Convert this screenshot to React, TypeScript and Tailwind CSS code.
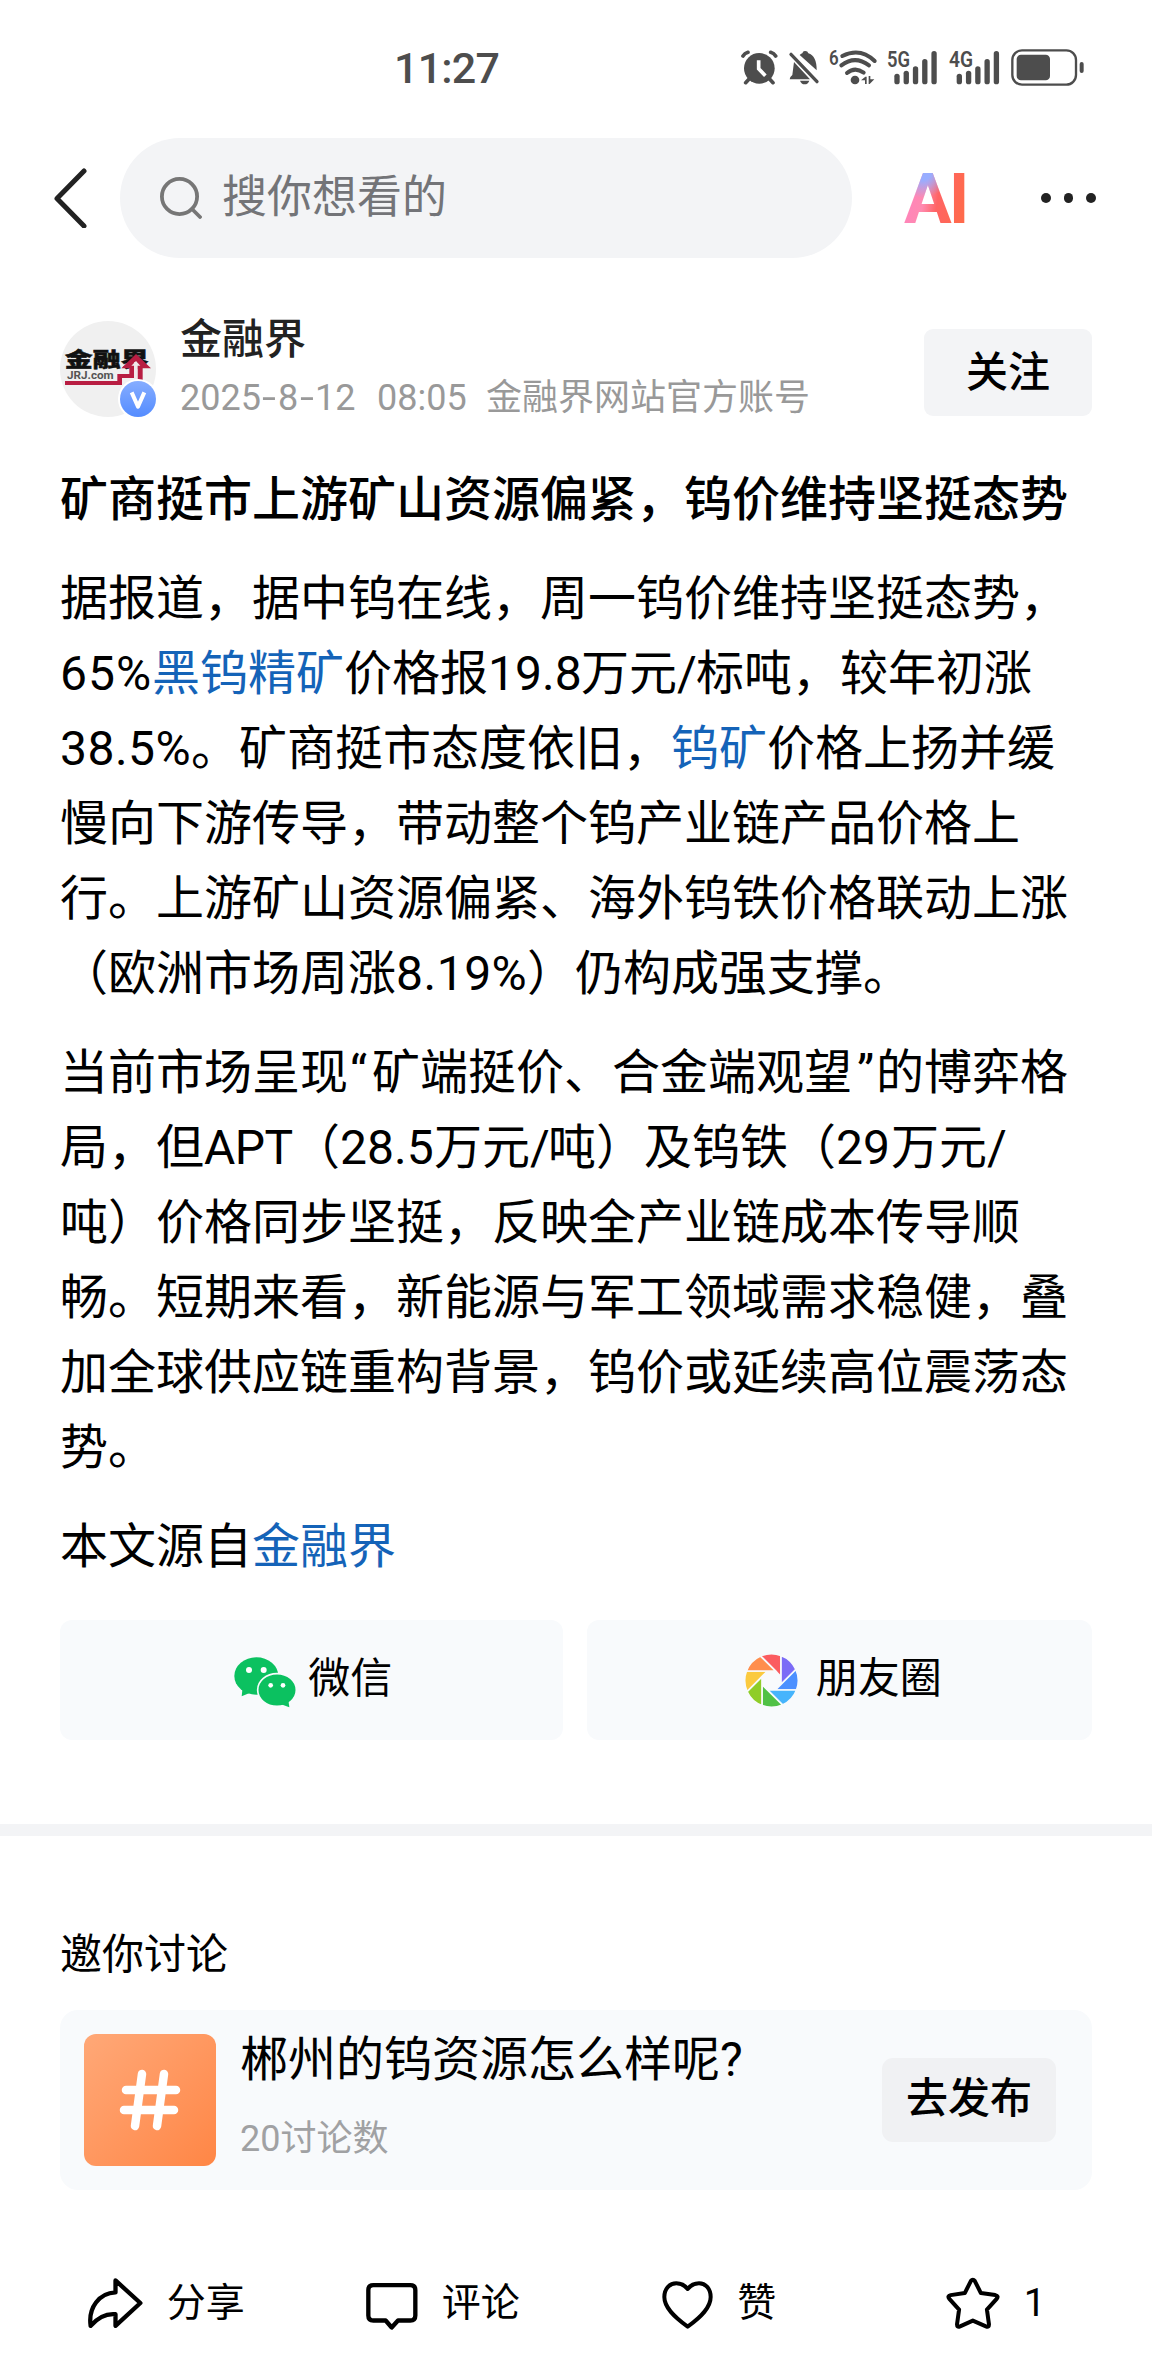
import type { ReactNode } from 'react';

const BARS_TOP = [101, 92, 79, 57, 33];

const PETALS = ['#fb5c60', '#7b6bf6', '#4c90ff', '#46b4fc', '#50c145', '#8fcd28', '#fbca3f', '#ff8e4d'];

function SignalBars({ x }: { x: number }) {
  return (
    <>
      {BARS_TOP.map((top, i) => (
        <rect key={top} x={x + i * 27.8 - 8} y={top} width="16" height={133 - top} rx="8" />
      ))}
    </>
  );
}

function StatusBar() {
  return (
    <div className="flex h-[138px] items-start pt-10 pl-[394px] text-[#4d4d4d]">
      <span className="w-[326px] pt-[6px] text-[43px] leading-[44px] font-medium tracking-[-.8px]">11:27</span>
      <svg className="h-[55px] w-[400px]" viewBox="0 0 1200 165" fill="#4d4d4d">
        {/* alarm */}
        <circle cx="118" cy="85" r="46" />
        <g stroke="#4d4d4d" strokeWidth="11" strokeLinecap="round" fill="none">
          <path d="M69 48 Q74 40 84 37M152 37 Q162 40 167 48M88 116 L77 128M148 116 L159 128" />
          <path d="M116 61 V86 L136 107" stroke="#fff" strokeLinecap="butt" />
        </g>
        {/* muted bell */}
        <path d="M209 118 Q208 112 217 105 L222 66 L270 118 Z" />
        <path d="M239 45 Q244 41 247 40 Q249 32 256 33 Q263 33 265 40 Q290 47 290 91 Z" />
        <path d="M240 122 H268 Q264 133 254 133 Q244 133 240 122 Z" />
        <path d="M213 43 L291 125" stroke="#4d4d4d" strokeWidth="10" strokeLinecap="round" />
        {/* wifi */}
        <text x="327" y="76" fontSize="62" fontWeight="600" textLength="29" lengthAdjust="spacingAndGlyphs">6</text>
        <g stroke="#4d4d4d" strokeWidth="12" strokeLinecap="round" fill="none">
          <path d="M367 48 Q421 21 464 63" />
          <path d="M364 76 Q405 45 447 76" />
          <path d="M381 99 Q405 79 431 98" />
        </g>
        <circle cx="405" cy="120" r="13" />
        <path d="M423 121 L436 110 H440 V132 H435 V121 Z" />
        <path d="M446 108 H451 V118 H463 L449 132 H446 Z" />
        {/* sim 1 */}
        <text x="501" y="82" fontSize="67" fontWeight="600" textLength="69" lengthAdjust="spacingAndGlyphs">5G</text>
        <SignalBars x={531} />
        {/* sim 2 */}
        <text x="687" y="82" fontSize="67" fontWeight="600" textLength="72" lengthAdjust="spacingAndGlyphs">4G</text>
        <SignalBars x={718} />
        {/* battery */}
        <rect x="877" y="31" width="191" height="103" rx="29" fill="none" stroke="#4d4d4d" strokeWidth="7" />
        <rect x="890" y="44" width="100" height="77" rx="13" />
        <rect x="1079" y="66" width="12" height="33" rx="6" />
      </svg>
    </div>
  );
}

function SearchHeader() {
  return (
    <div className="flex h-30 items-center pl-[53px]">
      <svg className="h-[60px] w-[35px]" viewBox="0 0 35 60" fill="none" stroke="#222" strokeWidth="5" strokeLinecap="round" strokeLinejoin="round">
        <path d="M31 3 L4 30.500 L31 58" />
      </svg>
      <div className="ml-8 flex h-30 w-[732px] items-center rounded-full bg-[#f3f4f6] pl-10 text-[#737478]">
        <svg className="h-[42px] w-[42px]" viewBox="0 0 42 42" fill="none" stroke="#767676" strokeWidth="3.800" strokeLinecap="round">
          <circle cx="19.500" cy="19.500" r="17.600" />
          <path d="M32 32 L40 40" />
        </svg>
        <span className="-mt-[2px] ml-5 text-[45px] leading-none">搜你想看的</span>
      </div>
      <span className="ml-[52px] w-[68px] bg-[radial-gradient(circle_at_19px_0px,#98adff_8px,#c79be600_26px),linear-gradient(100deg,#ff86b8_12px,#ff8ab0_24px,#ff6464_38px,#ff6a4c_64px)] bg-clip-text pt-[1px] text-[71px] leading-[52px] font-bold tracking-[-3px] text-transparent">
        AI
      </span>
      <div className="ml-[69px] flex gap-[13px]">
        <i className="size-[9.500px] rounded-full bg-[#222]" />
        <i className="size-[9.500px] rounded-full bg-[#222]" />
        <i className="size-[9.500px] rounded-full bg-[#222]" />
      </div>
    </div>
  );
}

function Avatar() {
  return (
    <svg className="size-24" viewBox="60 63 288 288">
      <defs>
        <linearGradient id="badge" x1="0" y1="0" x2="0" y2="1">
          <stop offset="0" stopColor="#86adff" />
          <stop offset="1" stopColor="#548cff" />
        </linearGradient>
      </defs>
      <circle cx="204" cy="207" r="144" fill="#f0f0f0" />
      <text transform="translate(74 202) scale(1 .74)" fontSize="84" fontWeight="900" fill="#111" stroke="#111" strokeWidth="2">金融界</text>
      <text x="81" y="238" fontSize="31" fontWeight="700" fill="#555" textLength="140" lengthAdjust="spacingAndGlyphs">JRJ.com</text>
      <path d="M75 243 H232 V222 H268 V205 H244 L288 162 L333 205 H308 V250 H292 V187 H282 V234 H246 V255 H75 Z" fill="#b81d42" />
      <path d="M288 183 L274 197 H282 V250 H293 V197 H301 Z" fill="#f0e8ea" />
      <circle cx="294" cy="297" r="60" fill="#fff" />
      <circle cx="294" cy="297" r="54" fill="url(#badge)" />
      <path d="M275 277 L294 320 L313 277" fill="none" stroke="#fff" strokeWidth="12" strokeLinejoin="round" />
    </svg>
  );
}

function Author() {
  return (
    <div className="mt-[63px] flex h-24 px-15">
      <Avatar />
      <div className="ml-6 flex-1">
        <div className="-mt-[5px] text-[42px] leading-12 font-medium text-[#222]">金融界</div>
        <div className="mt-[12px] flex text-[36px] leading-11 whitespace-nowrap text-[#999]">
          <span className="w-[197px]">
            2025<span className="mx-[3.500px] inline-block scale-x-140">-</span>8<span className="mx-[3.500px] inline-block scale-x-140">-</span>12
          </span>
          <span className="w-[109px]">08:05</span>
          <span>金融界网站官方账号</span>
        </div>
      </div>
      <button className="mt-2 flex h-[87px] w-[168px] items-center justify-center rounded-[9px] bg-[#f3f4f6] text-[42px] leading-none font-medium text-black">
        关注
      </button>
    </div>
  );
}

function Link({ children }: { children: ReactNode }) {
  return <a className="text-[#1463b8]">{children}</a>;
}

function Run({ children, className }: { children: ReactNode; className: string }) {
  return <span className={`inline-block ${className}`}>{children}</span>;
}

function Article() {
  return (
    <article className="mt-[45px] flex flex-col gap-6 px-15 text-[48px] leading-[75px] whitespace-nowrap text-black">
      <h1 className="font-medium">矿商挺市上游矿山资源偏紧，钨价维持坚挺态势</h1>
      <p>
        据报道，据中钨在线，周一钨价维持坚挺态势，
        <br />
        <Run className="w-[92px] tracking-[1px]">65%</Run><Link>黑钨精矿</Link>价格报<Run className="w-[93px]">19.8</Run>万元<Run className="w-[19px]">/</Run>标吨，较年初涨
        <br />
        <Run className="w-[131px] tracking-[.5px]">38.5%</Run>。矿商挺市态度依旧，<Link>钨矿</Link>价格上扬并缓
        <br />
        慢向下游传导，带动整个钨产业链产品价格上
        <br />
        行。上游矿山资源偏紧、海外钨铁价格联动上涨
        <br />
        （欧洲市场周涨<Run className="w-[131px] tracking-[.5px]">8.19%</Run>）仍构成强支撑。
      </p>
      <p>
        当前市场呈现<Run className="w-6 pl-[2px]">“</Run>矿端挺价、合金端观望<Run className="w-6 pl-[5px]">”</Run>的博弈格
        <br />
        局，但<Run className="w-[88px] tracking-[-.5px]">APT</Run>（<Run className="w-[94px]">28.5</Run>万元<Run className="w-[18px]">/</Run>吨）及钨铁（<Run className="w-[55px]">29</Run>万元/
        <br />
        吨）价格同步坚挺，反映全产业链成本传导顺
        <br />
        畅。短期来看，新能源与军工领域需求稳健，叠
        <br />
        加全球供应链重构背景，钨价或延续高位震荡态
        <br />
        势。
      </p>
      <p>本文源自<Link>金融界</Link></p>
    </article>
  );
}

function WechatIcon() {
  return (
    <svg className="mt-[5px] h-[51px] w-[62px]" viewBox="104 142 186 153" fill="#0bc160">
      <ellipse cx="171" cy="199" rx="66" ry="56" />
      <path d="M130 232 L127 260 L156 248 Z" />
      <g stroke="#f8fafc" strokeWidth="5">
        <ellipse cx="233" cy="241" rx="58" ry="49" />
      </g>
      <path d="M267 270 L270 293 L243 283 Z" />
      <g fill="#fff">
        <circle cx="149" cy="181" r="9" />
        <circle cx="193" cy="181" r="9" />
        <circle cx="214" cy="227" r="7" />
        <circle cx="251" cy="227" r="7" />
      </g>
    </svg>
  );
}

function MomentsIcon() {
  return (
    <svg className="size-[55px]" viewBox="-81 -81 162 162" stroke="#f8fafc" strokeWidth="5">
      {PETALS.map((color, i) => (
        <path key={color} d="M28 -11.600 L-32.400 -72 A79 79 0 0 1 28 -73.900 Z" fill={color} transform={`rotate(${i * 45})`} />
      ))}
    </svg>
  );
}

function ShareButtons() {
  return (
    <div className="mt-9 flex gap-6 px-15 text-[42px] leading-none text-black">
      <button className="flex h-30 flex-1 items-center justify-center gap-[12px] rounded-xl bg-[#f8fafc] pl-1">
        <WechatIcon />
        <span className="-mt-[2px]">微信</span>
      </button>
      <button className="flex h-30 flex-1 items-center justify-center gap-[17px] rounded-xl bg-[#f8fafc] pl-[7px]">
        <MomentsIcon />
        <span className="-mt-[2px]">朋友圈</span>
      </button>
    </div>
  );
}

function Discussion() {
  return (
    <section className="px-15 text-black">
      <h2 className="pt-[94px] text-[42px] leading-[50px]">邀你讨论</h2>
      <div className="mt-[30px] flex h-[180px] items-center rounded-[18px] bg-[#f8fafc] pr-9 pl-6">
        <div className="flex size-33 items-center justify-center rounded-xl bg-linear-to-br from-[#ffa877] to-[#ff8645]">
          <svg className="size-[62px]" viewBox="0 0 62 62" fill="none" stroke="#fff" strokeWidth="8.500" strokeLinecap="round">
            <path d="M23 5 L16 57M45 5 L38 57M7 21 H57M5 41 H55" />
          </svg>
        </div>
        <div className="ml-6 flex-1 self-start">
          <div className="mt-[20px] text-[48px] leading-[60px]">郴州的钨资源怎么样呢?</div>
          <div className="mt-[26px] text-[36px] leading-[46px] text-[#a0a1a3]">20讨论数</div>
        </div>
        <button className="flex h-[84px] w-[174px] items-center justify-center rounded-[11px] bg-[#f0f1f3] pb-[3px] text-[42px] leading-none font-medium">
          去发布
        </button>
      </div>
    </section>
  );
}

function Action({ label, children }: { label: string; children: ReactNode }) {
  return (
    <div className="flex w-[276.500px] items-center justify-center gap-6">
      {children}
      <span className="text-[39px] leading-[50px]">{label}</span>
    </div>
  );
}

function ActionBar() {
  return (
    <nav className="mt-[77px] flex h-[72px] items-center pl-7 text-black">
      <Action label="分享">
        <svg className="h-[50px] w-[55px]" viewBox="84 81 166 150" fill="none" stroke="currentColor" strokeWidth="13" strokeLinejoin="round">
          <path d="M167 88 L242 156 L167 225 V190 C135 187 113 201 92 225 C84 170 118 126 167 124 Z" />
        </svg>
      </Action>
      <Action label="评论">
        <svg className="mt-[6px] h-[47px] w-[52px]" viewBox="920 97 156 140" fill="none" stroke="currentColor" strokeWidth="13" strokeLinejoin="round">
          <path d="M942 103 H1053 Q1068 103 1068 118 V194 Q1068 209 1053 209 H1016 L997 230 L979 209 H942 Q927 209 927 194 V118 Q927 103 942 103 Z" />
        </svg>
      </Action>
      <Action label="赞">
        <svg className="mt-1 h-12 w-[51px]" viewBox="67 90 153 144" fill="none" stroke="currentColor" strokeWidth="12" strokeLinejoin="round">
          <path d="M144 227 C104 198 74 170 74 138 C74 112 91 97 110 97 C125 97 136 104 144 114 C152 104 163 97 178 97 C197 97 213 112 213 138 C213 170 184 198 144 227 Z" />
        </svg>
      </Action>
      <Action label="1">
        <svg className="h-[52px] w-[54px]" viewBox="917 76 161 155" fill="none" stroke="currentColor" strokeWidth="12" strokeLinejoin="round">
          <path d="M991 88 Q997 80 1003 88 L1021 124 L1064 130 Q1075 133 1068 141 L1039 173 L1045 216 Q1046 227 1036 223 L997 206 L959 223 Q949 227 950 216 L956 173 L927 141 Q920 133 931 130 L973 124 Z" />
        </svg>
      </Action>
    </nav>
  );
}

function App() {
  return (
    <div className="h-[2376px] w-[1152px] overflow-hidden bg-white font-[Roboto,'Noto_Sans_CJK_SC',sans-serif] [text-spacing-trim:space-all]" lang="zh-CN">
      <StatusBar />
      <SearchHeader />
      <Author />
      <Article />
      <ShareButtons />
      <div className="mt-[84px] h-3 bg-[#f3f4f6]" />
      <Discussion />
      <ActionBar />
    </div>
  );
}

export default App;
